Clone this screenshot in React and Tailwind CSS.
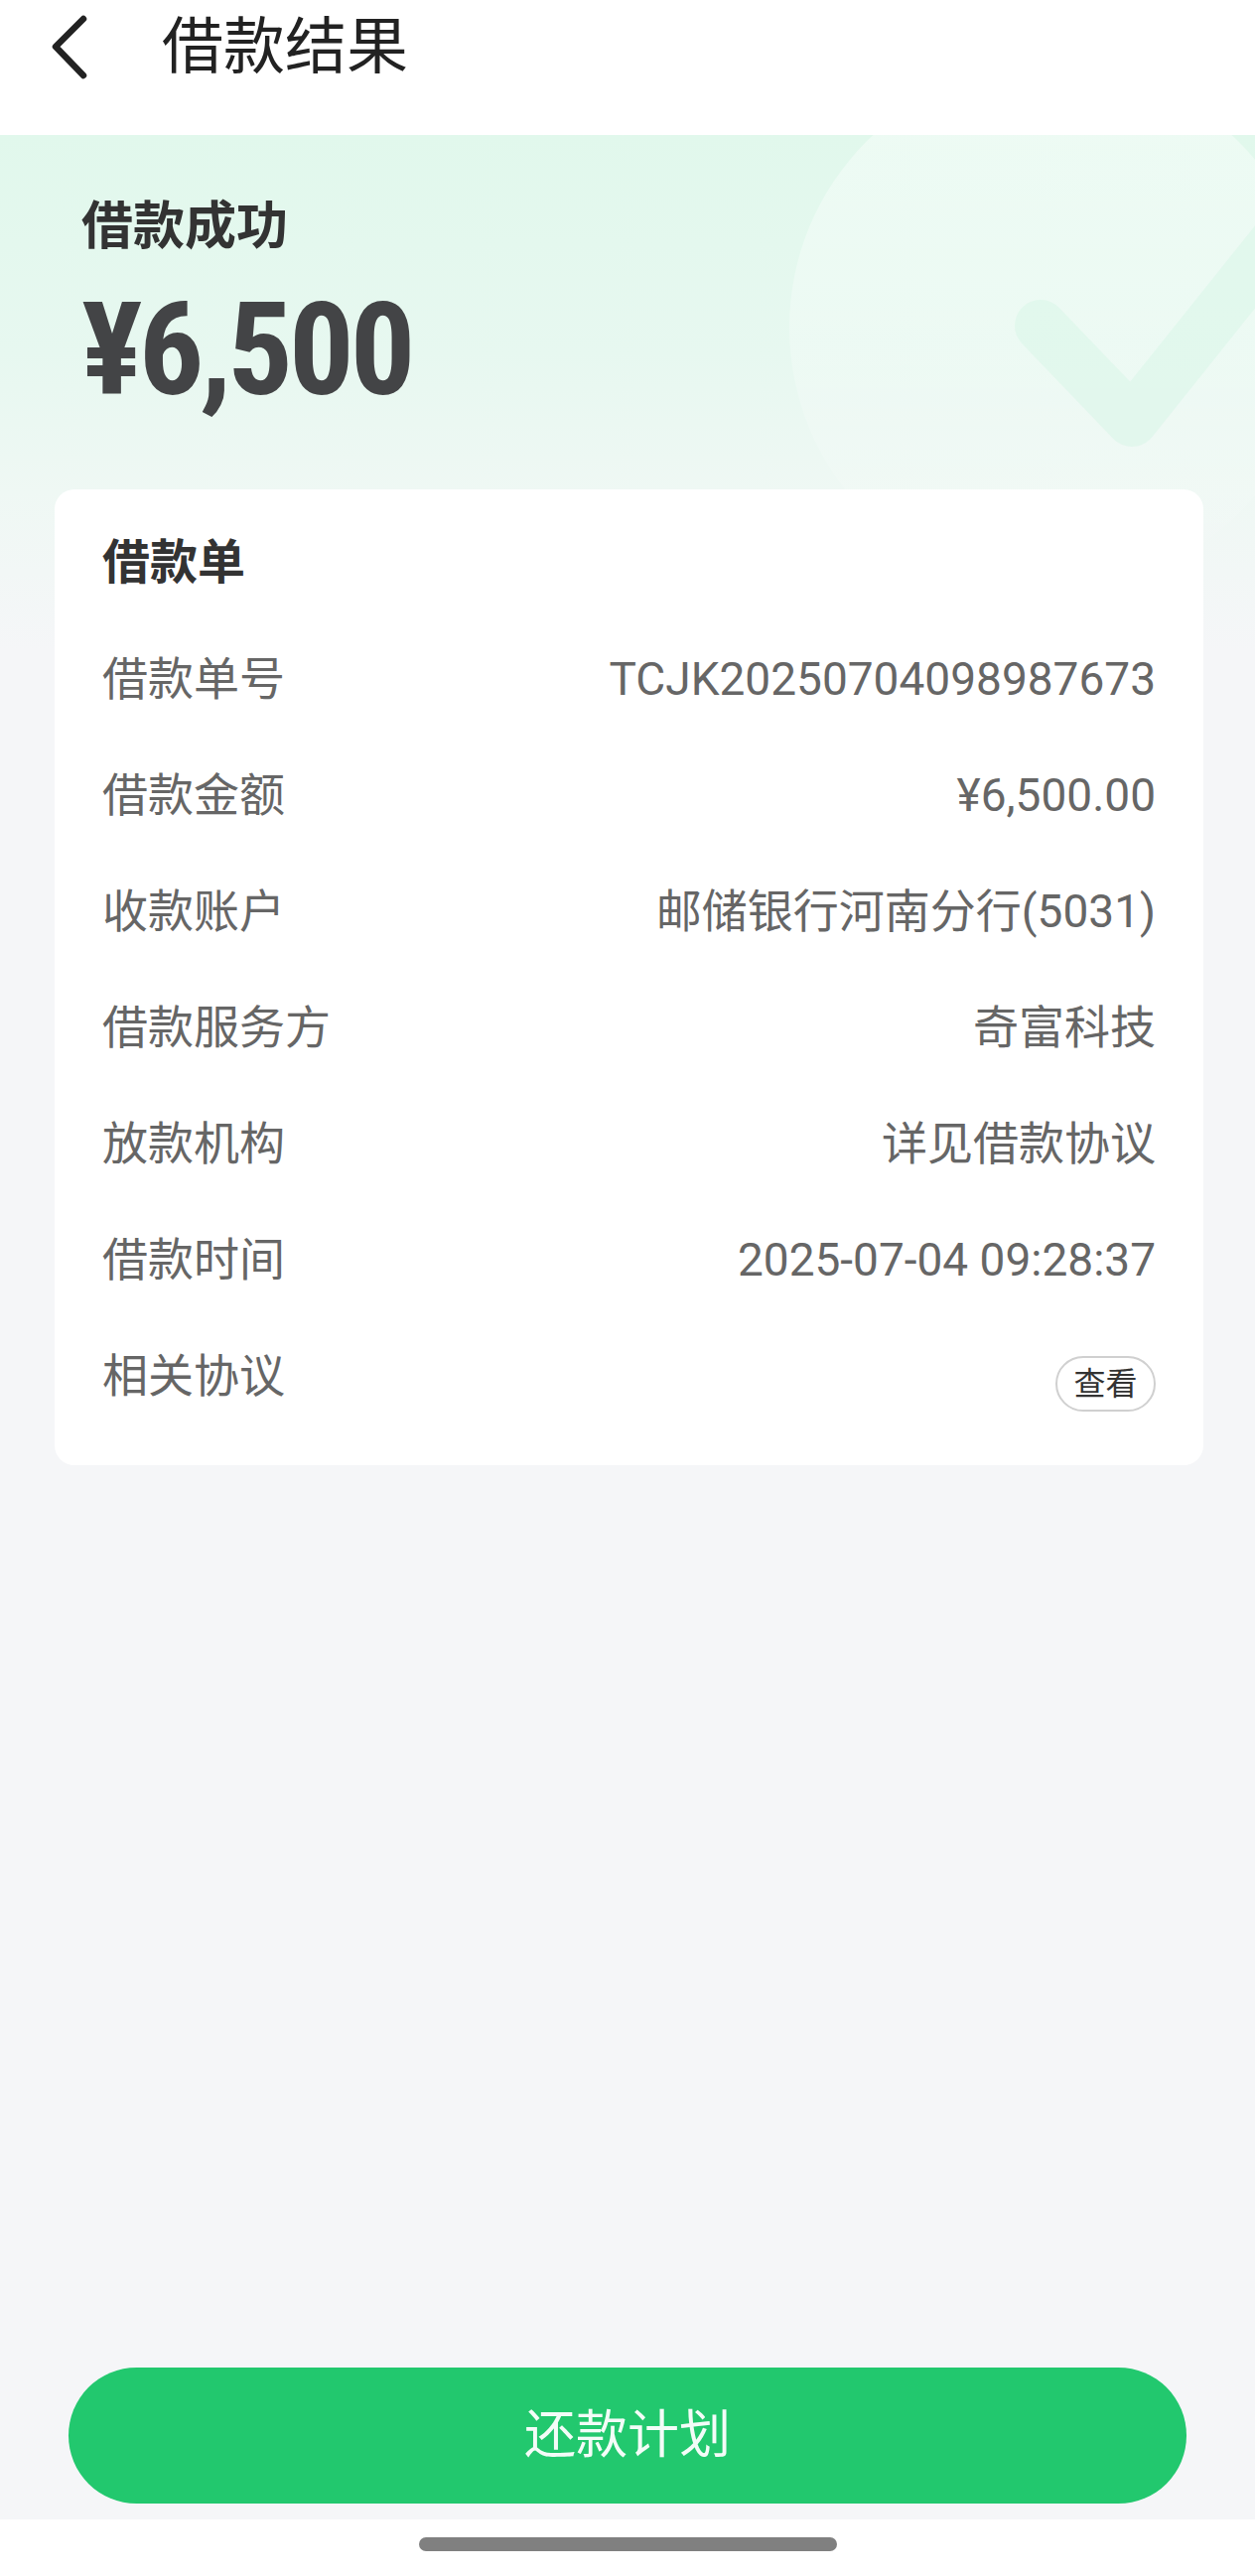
import { useState } from "react";

const rows = [
  { label: "借款单号", value: "TCJK20250704098987673" },
  { label: "借款金额", value: "¥6,500.00" },
  { label: "收款账户", value: "邮储银行河南分行(5031)" },
  { label: "借款服务方", value: "奇富科技" },
  { label: "放款机构", value: "详见借款协议" },
  { label: "借款时间", value: "2025-07-04 09:28:37" },
];

function BackIcon() {
  return (
    <svg width="44" height="70" viewBox="0 0 44 70" fill="none">
      <polyline
        points="34,6 6,34 34,63"
        stroke="#222"
        strokeWidth="6.5"
        strokeLinecap="round"
        strokeLinejoin="round"
      />
    </svg>
  );
}

export default function App() {
  const [showAgreement, setShowAgreement] = useState(false);

  return (
    <div className="w-[1264px] min-h-[2595px] flex flex-col bg-[#f5f6f8] font-[Roboto,'Noto_Sans_CJK_SC',sans-serif]">
      {/* top bar */}
      <header className="h-[136px] bg-white">
        <div className="h-[96px] flex items-center pl-[50px]">
          <BackIcon />
          <h1 className="ml-[69px] text-[62px] leading-none text-[#222] font-normal">借款结果</h1>
        </div>
      </header>

      {/* result + detail card */}
      <section className="relative overflow-hidden bg-[linear-gradient(180deg,#e1f8ec_0px,#e7f8f0_220px,#eff8f4_360px,#f5f6f8_520px)]">
        <div className="absolute left-[795px] top-[-71px] w-[530px] h-[530px] rounded-full bg-[linear-gradient(180deg,rgba(255,255,255,0.45),rgba(255,255,255,0.25)_55%,rgba(255,255,255,0))]" />
        <svg className="absolute left-[1000px] top-[52px]" width="264" height="290" viewBox="0 0 264 290" fill="none">
          <polyline
            points="48,140 140,236 300,36"
            stroke="#ddf7ea"
            strokeOpacity="0.7"
            strokeWidth="52"
            strokeLinecap="round"
            strokeLinejoin="round"
          />
        </svg>

        <div className="relative pt-[62px] pl-[82px]">
          <p className="text-[52px] leading-[62px] font-bold text-[#333]">借款成功</p>
          <p className="mt-[28px] text-[130px] leading-none font-bold text-[#434446] tracking-[-4px] font-['Liberation_Sans_Narrow','Roboto_Condensed',Roboto,sans-serif]">
            ¥6,500
          </p>
        </div>

        <div className="relative ml-[55px] mr-[52px] mt-[75px] rounded-[20px] bg-white px-[48px] pt-[45px] pb-[31px]">
          <h2 className="text-[48px] leading-[58px] font-bold text-[#333]">借款单</h2>
          <div className="mt-[30px]">
            {rows.map((r) => (
              <div key={r.label} className="h-[117px] flex items-center justify-between text-[46px] text-[#666]">
                <span>{r.label}</span>
                <span>{r.value}</span>
              </div>
            ))}
            <div className="h-[117px] flex items-center justify-between text-[46px] text-[#666]">
              <span>相关协议</span>
              <button
                onClick={() => setShowAgreement(!showAgreement)}
                className="mt-[14px] w-[101px] h-[56px] rounded-full border-2 border-[#d0d0d0] text-[32px] leading-none text-[#333] flex items-center justify-center"
              >
                查看
              </button>
            </div>
          </div>
        </div>
      </section>

      {/* bottom action */}
      <div className="mt-auto px-[69px] pb-[16px]">
        <button className="w-full h-[137px] rounded-full bg-[#22c86e] text-[52px] text-white/95 flex items-center justify-center">
          还款计划
        </button>
      </div>
      <div className="h-[57px] bg-white flex justify-center pt-[18px]">
        <div className="w-[421px] h-[14px] rounded-full bg-[#808080]" />
      </div>
    </div>
  );
}
